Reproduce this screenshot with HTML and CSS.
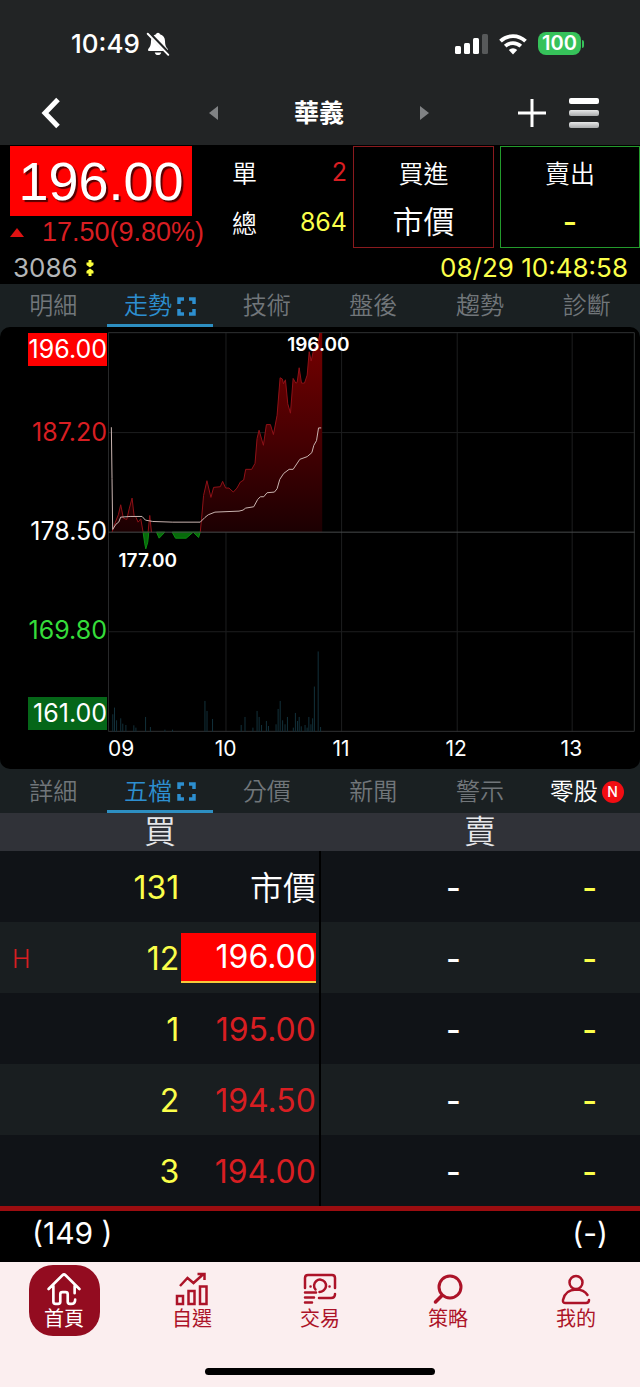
FILE: index.html
```html
<!DOCTYPE html>
<html lang="zh-Hant">
<head>
<meta charset="utf-8">
<meta name="viewport" content="width=device-width, initial-scale=1">
<title>華義 3086</title>
<link rel="stylesheet" href="styles.css">
</head>
<body>
<div class="top">
  <div class="status">
    <div class="status-side">
      <span class="clock">10:49</span>
      <svg width="26" height="26" viewBox="0 0 24 24" aria-hidden="true">
        <path d="M12 1.500c-1 0-1.700.7-1.800 1.600C7.200 4 5.500 6.400 5.500 9.500c0 4-1 5.500-2.300 6.800-.8.900-.4 2.200.8 2.200h16c1.200 0 1.600-1.300.8-2.200-1.300-1.300-2.300-2.800-2.300-6.800 0-3.100-1.700-5.500-4.700-6.400C13.700 2.200 13 1.500 12 1.500zM9 19.800c.3 1.500 1.500 2.400 3 2.400s2.700-.9 3-2.400z" fill="#fff"/>
        <path d="M3.500 2 22 21" stroke="#222425" stroke-width="3.500"/>
        <path d="M2.500 2.500 21.500 22" stroke="#fff" stroke-width="1.800" stroke-linecap="round"/>
      </svg>
    </div>
    <div class="status-side status-right">
      <svg width="33" height="22" viewBox="0 0 33 22" aria-hidden="true">
        <rect x="0" y="13" width="6" height="8" rx="1.500" fill="#fff"/>
        <rect x="9" y="10" width="6" height="11" rx="1.500" fill="#fff"/>
        <rect x="18" y="5" width="6" height="16" rx="1.500" fill="#fff"/>
        <rect x="27" y="1" width="6" height="20" rx="1.500" fill="#57595a"/>
      </svg>
      <svg width="28" height="22" viewBox="0 0 28 22" fill="none" stroke="#fff" stroke-width="3.800" aria-hidden="true">
        <path d="M1.500 8.200a18 18 0 0 1 25 0"/>
        <path d="M6.200 13.200a11.500 11.500 0 0 1 15.600 0"/>
        <path d="M14 21.500 9.800 17a6 6 0 0 1 8.400 0z" fill="#fff" stroke="none"/>
      </svg>
      <div class="battery"><span class="battery-level">100</span><span class="battery-cap"></span></div>
    </div>
  </div>

  <header class="header">
    <button class="icon-btn" aria-label="返回">
      <svg width="22" height="32" viewBox="0 0 22 32" fill="none" stroke="#fff" stroke-width="5"><path d="M19 2.500 6 16l13 13.500"/></svg>
    </button>
    <div class="switcher">
      <button class="icon-btn" aria-label="上一檔"><svg width="9" height="14" viewBox="0 0 9 14"><path d="M9 0v14L0 7z" fill="#808284"/></svg></button>
      <h1 class="title">華義</h1>
      <button class="icon-btn" aria-label="下一檔"><svg width="9" height="14" viewBox="0 0 9 14"><path d="M0 0v14l9-7z" fill="#808284"/></svg></button>
    </div>
    <div class="actions">
      <button class="icon-btn" aria-label="加入自選"><svg width="28" height="28" viewBox="0 0 28 28" stroke="#fff" stroke-width="3"><path d="M14 0v28M0 14h28"/></svg></button>
      <button class="icon-btn" aria-label="選單">
        <svg width="30" height="30" viewBox="0 0 30 30">
          <defs><linearGradient id="bar" x1="0" y1="0" x2="0" y2="1"><stop offset="0" stop-color="#e8e9e9"/><stop offset="1" stop-color="#a8aaab"/></linearGradient></defs>
          <rect width="30" height="6" rx="2" fill="#fff"/><rect y="12" width="30" height="6" rx="2" fill="url(#bar)"/><rect y="24" width="30" height="6" rx="2" fill="url(#bar)"/>
        </svg>
      </button>
    </div>
  </header>
</div>

<main>
  <section class="quote">
    <div class="last">
      <div class="last-price">196.00</div>
      <div class="change"><span class="up-arrow"></span><span>17.50(9.80%)</span></div>
    </div>
    <dl class="volume">
      <dt>單</dt><dd class="red">2</dd>
      <dt>總</dt><dd class="yellow">864</dd>
    </dl>
    <button class="order buy"><span>買進</span><span class="order-price">市價</span></button>
    <button class="order sell"><span>賣出</span><span class="order-price none">-</span></button>
  </section>
  <div class="meta">
    <span class="code">3086
      <svg width="8" height="16" viewBox="0 0 8 16" fill="#fbff3c" aria-hidden="true"><path d="M2.500 0h3v2.500H7.500V5L4 7.500.500 5V2.500h2zM4 8.500 7.500 11v2.500h-2V16h-3v-2.500h-2V11z"/></svg>
    </span>
    <time class="yellow">08/29 10:48:58</time>
  </div>

  <nav class="tabs" aria-label="圖表">
    <button class="tab">明細</button>
    <button class="tab active">走勢<svg width="19" height="19" viewBox="0 0 19 19" fill="none" stroke="currentColor" stroke-width="3.500" aria-hidden="true"><path d="M2 7V2h5M12 2h5v5M17 12v5h-5M7 17H2v-5"/></svg></button>
    <button class="tab">技術</button>
    <button class="tab">盤後</button>
    <button class="tab">趨勢</button>
    <button class="tab">診斷</button>
  </nav>

  <section class="chart-wrap">
    <div class="chart">
      <div class="y-axis">
        <span class="limit-up">196.00</span>
        <span class="red">187.20</span>
        <span>178.50</span>
        <span class="green">169.80</span>
        <span class="limit-down">161.00</span>
      </div>
      <div class="plot">
        <svg class="plot-svg" viewBox="26 21 1577 1197" aria-label="走勢圖">
          <defs><linearGradient id="area" gradientUnits="userSpaceOnUse" x1="0" y1="21" x2="0" y2="620"><stop offset="0" stop-color="#760000"/><stop offset=".5" stop-color="#4a0002"/><stop offset="1" stop-color="#1c0002"/></linearGradient></defs>
          <path class="grid-line" d="M27 322H1602M27 918H1602M379 22V1217M725 22V1217M1071 22V1217M1415 22V1217"/>
          <rect class="frame" x="27" y="23" width="1574" height="1193"/>
          <g transform="translate(0 765) scale(1.033 1)">
            <path class="bars" d="M39 452V400M44 452V380M50 452V418M62 452V412M68 452V428M77 452V432M100 452V433M106 452V440M134 452V408M148 452V438M190 452V446M212 452V446M306 452V360M312 452V390M328 452V414M411 452V432M422 452V408M445 452V440M457 452V390M463 452V408M470 452V432M484 452V420M490 452V435M512 452V430M518 452V384M524 452V360M531 452V418M538 452V430M545 452V408M562 452V440M568 452V396M574 452V420M579 452V408M585 452V436M596 452V432M602 452V440M607 452V408M613 452V430M618 452V412M623 452V317M634 452V212M641 452V438"/>
          </g>
          <path fill="url(#area)" d="M38 620 48 590 57 568 64 538 72 578 82 582 90 548 98 518 104 570 110 576 116 590 124 580 131 620zM146 620 151 570 156 620zM302 620 306 580 312 510 322 466 334 516 342 486 362 484 369 468 378 488 388 488 401 500 412 488 422 470 432 464 438 432 456 432 466 414 472 340 478 315 491 360 500 298 512 298 521 328 532 270 541 158 548 162 551 176 557 164 564 236 572 264 580 160 588 174 592 172 598 128 605 174 614 174 622 150 628 80 634 108 642 70 654 60 660 24 667 24V620z"/>
          <path class="price-up" d="M38 620 48 590 57 568 64 538 72 578 82 582 90 548 98 518 104 570 110 576 116 590 124 580 131 620M146 620 151 570 156 620M302 620 306 580 312 510 322 466 334 516 342 486 362 484 369 468 378 488 388 488 401 500 412 488 422 470 432 464 438 432 456 432 466 414 472 340 478 315 491 360 500 298 512 298 521 328 532 270 541 158 548 162 551 176 557 164 564 236 572 264 580 160 588 174 592 172 598 128 605 174 614 174 622 150 628 80 634 108 642 70 654 60 660 24"/>
          <path class="price-down" d="M131 620 136 655 139 670 145 650 148 620zM171 620 179 638 196 620zM218 620 228 638H260L281 620 297 636 302 620z"/>
          <path class="base-line" d="M27 620H1602"/>
          <path class="average" d="M36 306 38 460 40 612 50 596 58 590 64 575 92 573H128L138 584 160 588 220 590H302L316 576 326 568 346 560 418 557 430 554 438 548 462 544 474 522 482 514 492 514 502 502 524 500 532 490 540 462 552 444 568 432 580 432 600 402 622 394 636 382 642 360 650 346 656 308H664"/>
        </svg>
        <span class="mark mark-high">196.00</span>
        <span class="mark mark-low">177.00</span>
      </div>
      <div class="x-axis"><span>09</span><span>10</span><span>11</span><span>12</span><span>13</span></div>
    </div>
  </section>

  <nav class="tabs tabs-lower" aria-label="資訊">
    <button class="tab">詳細</button>
    <button class="tab active">五檔<svg width="19" height="19" viewBox="0 0 19 19" fill="none" stroke="currentColor" stroke-width="3.500" aria-hidden="true"><path d="M2 7V2h5M12 2h5v5M17 12v5h-5M7 17H2v-5"/></svg></button>
    <button class="tab">分價</button>
    <button class="tab">新聞</button>
    <button class="tab">警示</button>
    <button class="tab odd-lot">零股<span class="new">N</span></button>
  </nav>

  <table class="book">
    <colgroup><col class="c-mark"><col class="c-qty"><col class="c-price"><col class="c-ask"><col class="c-askqty"></colgroup>
    <thead><tr><th colspan="3">買</th><th colspan="2">賣</th></tr></thead>
    <tbody>
      <tr><td></td><td class="qty">131</td><td class="price market">市價</td><td class="ask">-</td><td class="ask-qty">-</td></tr>
      <tr><td class="mark-cell">H</td><td class="qty">12</td><td class="price best"><span>196.00</span></td><td class="ask">-</td><td class="ask-qty">-</td></tr>
      <tr><td></td><td class="qty">1</td><td class="price">195.00</td><td class="ask">-</td><td class="ask-qty">-</td></tr>
      <tr><td></td><td class="qty">2</td><td class="price">194.50</td><td class="ask">-</td><td class="ask-qty">-</td></tr>
      <tr><td></td><td class="qty">3</td><td class="price">194.00</td><td class="ask">-</td><td class="ask-qty">-</td></tr>
    </tbody>
  </table>
  <div class="totals"><span>(149 )</span><span>(-)</span></div>
</main>

<footer class="bottom">
  <nav class="menu" aria-label="主選單">
    <a class="menu-item current" href="#home">
      <svg width="34" height="34" viewBox="0 0 32 32"><path d="M1.500 16 14.500 3q1.500-1.300 3 0L30.500 16M6 13v15q0 2 2 2h2.500q2 0 2-2v-7q0-2 2-2h3q2 0 2 2v7q0 2 2 2h1q4 0 4-4M26 13v7"/></svg>
      <span>首頁</span>
    </a>
    <a class="menu-item" href="#watch">
      <svg width="34" height="34" viewBox="0 0 34 34"><path stroke-linecap="butt" d="M2 24h6v8H2zM13.500 19h6v13h-6zM25 14.500h6.500V32H25zM5 14l7.500-8 6 5L28.500 2M22.500 2h7v6"/></svg>
      <span>自選</span>
    </a>
    <a class="menu-item" href="#trade">
      <svg width="34" height="34" viewBox="0 0 34 34"><path d="M2 16V6q0-3 3-3h24q3 0 3 3v10M2 20.500h11M2 25.500h9M2 30.500h7M16 26h12q4 0 4-4M12.500 17.500a6 6 0 1 1 8 1q-2 1.500-4 1.500M7.500 14.500h.1M26.500 14.500h.1"/></svg>
      <span>交易</span>
    </a>
    <a class="menu-item" href="#strategy">
      <svg width="34" height="34" viewBox="0 0 34 34"><circle cx="19" cy="15" r="11" stroke-width="3"/><path d="M11 23.500 4.500 30" stroke-width="3.500"/></svg>
      <span>策略</span>
    </a>
    <a class="menu-item" href="#me">
      <svg width="34" height="34" viewBox="0 0 34 34"><circle cx="17" cy="10.500" r="6.500"/><path d="M28.500 23Q25 17.500 17 17.500 6 18 4 28q-.5 3 2.500 3H27q3 0 3-3"/></svg>
      <span>我的</span>
    </a>
  </nav>
  <div class="home-bar"></div>
</footer>
</body>
</html>
```
FILE: styles.css
```css
* { box-sizing: border-box; }
body {
  margin: 0;
  background: #000;
  color: #fff;
  font-family: Inter, "Noto Sans CJK TC", sans-serif;
  font-weight: 350;
}
button {
  margin: 0;
  padding: 0;
  border: 0;
  background: none;
  color: inherit;
  font: inherit;
}
svg { display: block; flex: none; }
.red { color: #d81e22; }
.yellow { color: #fbff4a; }
.green { color: #35dc3a; }

.top { background: #222425; }
.status {
  display: flex;
  justify-content: space-between;
  align-items: center;
  height: 81px;
  padding: 6px 56px 0 71px;
}
.status-side { display: flex; align-items: center; gap: 5px; }
.status-right { gap: 11px; }
.clock { font-size: 26px; font-weight: 500; }
.battery { display: flex; align-items: center; gap: 1px; }
.battery-level {
  width: 43px;
  border-radius: 8px;
  background: #36c25a;
  font-size: 20px;
  font-weight: 600;
  line-height: 23px;
  text-align: center;
}
.battery-cap { width: 2px; height: 8px; border-radius: 0 2px 2px 0; background: #36c25a; }

.header {
  display: grid;
  grid-template-columns: 1fr auto 1fr;
  align-items: center;
  height: 64px;
  padding: 0 41px 0 39px;
}
.icon-btn { display: block; }
.switcher { display: flex; align-items: center; justify-content: space-between; width: 220px; }
.title { margin: 0; font-size: 25px; font-weight: 700; line-height: 36px; }
.actions { display: flex; justify-content: flex-end; align-items: center; gap: 23px; }

.quote {
  display: grid;
  grid-template-columns: 194fr 137fr 141fr 140fr;
  column-gap: 6px;
  padding-left: 10px;
  padding-top: 1px;
}
.last { font-family: "Liberation Sans", sans-serif; font-weight: 400; }
.last-price {
  margin-right: 12px;
  background: #f00;
  font-size: 54px;
  line-height: 70px;
  text-align: center;
  text-shadow: 2px 2px 1px #500;
}
.change {
  display: flex;
  align-items: center;
  justify-content: space-between;
  color: #d81e22;
  font-size: 27px;
  line-height: 32px;
}
.up-arrow { border: 7px solid transparent; border-top: 0; border-bottom: 9px solid #e01212; }
.volume {
  display: grid;
  grid-template-columns: auto 1fr;
  grid-auto-rows: 50px;
  align-items: center;
  margin: 0 0 0 22px;
  padding-top: 1px;
  font-size: 25px;
}
.volume dd { margin: 0; font-weight: 400; text-align: right; }
.order {
  display: grid;
  grid-template-rows: 50px 50px;
  align-items: center;
  align-self: start;
  border: 1px solid;
  font-size: 25px;
  text-align: center;
}
.order-price { font-size: 31px; line-height: 40px; }
.none { color: #fbff4a; font-weight: 500; }
.buy { border-color: #8a1a1e; }
.sell { border-color: #239a2c; }
.meta {
  display: flex;
  justify-content: space-between;
  align-items: center;
  height: 36px;
  padding: 4px 12px 0 13px;
  font-size: 26px;
  font-weight: 400;
  line-height: 30px;
}
.code { display: flex; align-items: center; gap: 8px; color: #b4b6b8; }

.tabs {
  display: grid;
  grid-template-columns: repeat(6, 1fr);
  height: 43px;
  background: #1a2022;
}
.tab {
  display: flex;
  align-items: center;
  justify-content: center;
  gap: 5px;
  border-bottom: 3px solid transparent;
  padding-top: 4px;
  color: #71767a;
  font-size: 24px;
  line-height: 36px;
}
.tab.active { border-color: #2d8fc2; color: #2d8fd0; }
.tabs-lower { height: 44px; }
.tab.odd-lot { color: #fff; gap: 4px; }
.new {
  width: 22px;
  border-radius: 50%;
  background: #f20d12;
  font-size: 14px;
  font-weight: 500;
  line-height: 22px;
  text-align: center;
}

.chart-wrap { background: #1a2022; }
.chart {
  display: grid;
  grid-template-columns: 107px 1fr;
  column-gap: 1px;
  padding: 5px 5px 0 0;
  border-radius: 10px;
  background: #000;
}
.y-axis {
  display: grid;
  grid-template-rows: 1fr 2fr 2fr 2fr 1fr;
  justify-items: end;
  align-items: center;
  padding-top: 1px;
  padding-bottom: 2px;
  font-size: 25px;
  font-weight: 400;
  line-height: 33px;
}
.y-axis span { min-width: 79px; text-align: right; }
.limit-up { align-self: start; background: #f00; }
.limit-down { align-self: end; background: #056618; }
.plot { position: relative; }
.plot-svg { width: 100%; }
.plot-svg path, .plot-svg rect { vector-effect: non-scaling-stroke; }
.grid-line { stroke: #1d1e1f; }
.frame { fill: none; stroke: #2f3132; }
.base-line { stroke: #46494b; }
.bars { stroke: #12303a; }
.price-up { fill: none; stroke: #8f1117; }
.price-down { fill: #076a0b; stroke: #0c8c12; }
.average { fill: none; stroke: #c9b4b0; }
.mark { position: absolute; font-size: 19px; font-weight: 600; line-height: 26px; }
.mark-high { left: 34%; top: 0; }
.mark-low { left: 2%; top: 54%; }
.x-axis {
  grid-column: 2;
  display: grid;
  grid-template-columns: 60fr 115fr 115fr 115fr 115fr 6fr;
  padding-bottom: 3px;
  font-size: 21px;
  font-weight: 400;
  line-height: 34px;
  text-align: center;
}
.x-axis span:first-child { text-align: left; }

.book { width: 100%; border-collapse: collapse; table-layout: fixed; font-size: 32px; }
.c-mark { width: 10%; }
.c-qty { width: 18%; }
.c-price { width: 22%; }
.c-ask { width: 22%; }
.c-askqty { width: 28%; }
.book th { height: 38px; padding: 0; background: #303238; color: #e6e7ea; font-size: 32px; font-weight: 350; line-height: 38px; }
.book td { height: 71px; padding: 2px 0 0; font-weight: 400; text-align: right; line-height: 48px; }
.book tbody tr { background: #101317; }
.book tbody tr:nth-child(even) { background: #191e20; }
.book .mark-cell { padding-left: 12px; color: #d81e22; font-size: 25px; font-weight: 350; text-align: left; }
.book .qty { color: #fbff4a; }
.book .price { padding-right: 3px; border-right: 2px solid #000; color: #d81e22; }
.book .market { color: #fff; font-size: 33px; font-weight: 350; }
.book .best { padding-top: 0; }
.best span { display: block; margin-left: 2px; border-bottom: 2px solid #f6c83a; background: #f00; color: #fff; }
.book .ask-qty { padding-right: 43px; color: #fbff4a; }
.book .ask, .book .ask-qty { font-weight: 500; }

.totals {
  display: flex;
  justify-content: space-between;
  padding: 0 32px 7px;
  border-top: 5px solid #9c0d10;
  font-size: 30px;
  font-weight: 400;
  line-height: 44px;
}

.bottom { background: #fbeeef; padding-bottom: 13px; }
.menu { display: grid; grid-template-columns: repeat(5, 1fr); justify-items: center; padding-top: 3px; }
.menu-item {
  display: flex;
  flex-direction: column;
  align-items: center;
  justify-content: flex-end;
  width: 71px;
  height: 71px;
  padding-bottom: 4px;
  border-radius: 24px;
  color: #ac1328;
  font-size: 20px;
  font-weight: 400;
  line-height: 26px;
  text-decoration: none;
}
.menu-item svg { fill: none; stroke: currentColor; stroke-width: 2.5; stroke-linecap: round; }
.current { background: #930c20; color: #fff; }
.home-bar { width: 36%; height: 7px; margin: 32px auto 0; border-radius: 4px; background: #000; }
```
